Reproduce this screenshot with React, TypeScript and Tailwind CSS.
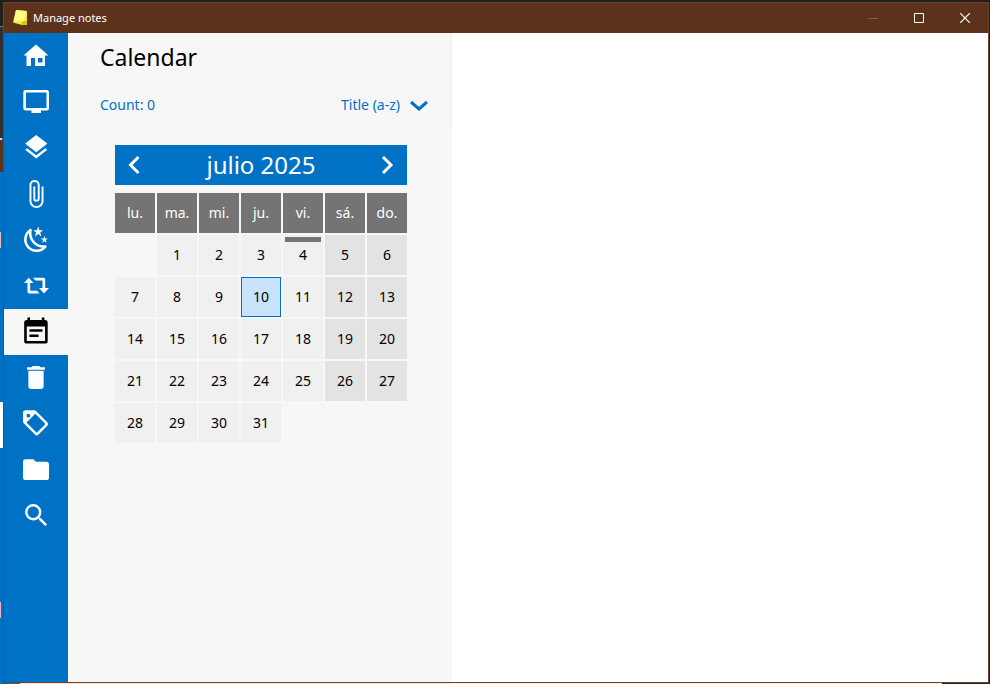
import React from "react";

type NavItem = { label: string; viewBox: string; drawing: React.ReactNode };

const navItems: NavItem[] = [
  {
    label: "Overview",
    viewBox: "0 0 32 32",
    drawing: (
      <path fillRule="evenodd" d="M16 4.5 28.5 15.5H25V26H15V18H11V26H6.5V15.5H3.5ZM18 18V22.5H22.5V18Z" />
    ),
  },
  {
    label: "Open notes",
    viewBox: "0 0 32 32",
    drawing: (
      <path
        fillRule="evenodd"
        d="M5.5 4H27A2.2 2.2 0 0 1 29 6.200V22.500A2.200 2.200 0 0 1 27 24.500H21V27H11.500V24.500H5.500A2.200 2.200 0 0 1 3.300 22.500V6.200A2.200 2.200 0 0 1 5.500 4ZM6 6.500V22H26.500V6.500Z"
      />
    ),
  },
  {
    label: "Stacks",
    viewBox: "-1.2 -0.4 26 26",
    drawing: (
      <path d="M11.990 18.540l-7.370-5.730L3 14.070l9 7 9-7-1.630-1.270-7.380 5.740zM12 16l7.360-5.730L21 9l-9-7-9 7 1.630 1.270L12 16z" />
    ),
  },
  {
    label: "Attachments",
    viewBox: "-0.5 -0.6 25.2 25.2",
    drawing: (
      <path d="M16.500 6v11.500c0 2.210-1.790 4-4 4s-4-1.790-4-4V5a2.500 2.500 0 0 1 5 0v10.500c0 .55-.45 1-1 1s-1-.45-1-1V6H10v9.500a2.500 2.500 0 0 0 5 0V5c0-2.210-1.790-4-4-4S7 2.790 7 5v12.500c0 3.040 2.460 5.500 5.500 5.500s5.500-2.460 5.500-5.500V6h-1.500z" />
    ),
  },
  {
    label: "Sleeping notes",
    viewBox: "0 0 32 32",
    drawing: (
      <>
        <path
          fill="none"
          stroke="currentColor"
          strokeWidth="2.5"
          strokeLinejoin="round"
          d="M10.500 6A11.300 11.300 0 1 0 25.500 22.500C16.500 23.500 8.500 16 10.500 6Z"
        />
        <path d="M18.200 2.500l1.300 3.700 3.700 0-3 2.400 1.200 3.800-3.200-2.300-3.200 2.300 1.200-3.800-3-2.400 3.700 0z" />
        <path d="M24.400 12l.9 2.400 2.600 0-2.100 1.700.8 2.600-2.200-1.500-2.200 1.500.8-2.600-2.100-1.700 2.600 0z" />
      </>
    ),
  },
  {
    label: "Recurrence",
    viewBox: "0 0 32 32",
    drawing: (
      <>
        <path d="M8.700 7.800 13.500 13H10.200V20.800H17L19.500 23.500H9.200A1.700 1.700 0 0 1 7.500 21.800V13H4Z" />
        <path d="M24 23.500 19 18H22.500V10.500H15.500L13 7.800H23.500A1.700 1.700 0 0 1 25.200 9.500V18H29Z" />
      </>
    ),
  },
  {
    label: "Calendar",
    viewBox: "-0.2 -0.1 24.5 24.5",
    drawing: (
      <path
        fillRule="evenodd"
        d="M19 3h-.500V1h-2v2H7.500V1h-2v2H5a2 2 0 0 0-2 2v14a2 2 0 0 0 2 2h14a2 2 0 0 0 2-2V5a2 2 0 0 0-2-2zm0 16H5V8h14v11zM7 10h10v2H7zM7 14h7v2H7z"
      />
    ),
  },
  {
    label: "Trash",
    viewBox: "-0.6 -0.2 25.2 25.2",
    drawing: <path d="M6 19c0 1.100.9 2 2 2h8c1.100 0 2-.9 2-2V6.700H6zM19 4h-3.500l-1-1h-5l-1 1H5v2h14z" />,
  },
  {
    label: "Tags",
    viewBox: "-0.4 0.2 25.6 25.6",
    drawing: (
      <path
        fillRule="evenodd"
        d="M21.410 11.580l-9-9A2 2 0 0 0 11 2H4a2 2 0 0 0-2 2v7a2 2 0 0 0 .59 1.420l9 9a2 2 0 0 0 2.820 0l7-7a2 2 0 0 0 0-2.840zM13 20l-8.200-8.200L11.800 4.800 20 13zM6.300 4.800a1.500 1.500 0 1 1 0 3 1.500 1.500 0 0 1 0-3z"
      />
    ),
  },
  {
    label: "Notebooks",
    viewBox: "-0.3 0 24.6 24.6",
    drawing: <path d="M10 4H4a2 2 0 0 0-2 2v12a2 2 0 0 0 2 2h16a2 2 0 0 0 2-2V8a2 2 0 0 0-2-2h-8z" />,
  },
  {
    label: "Search",
    viewBox: "-1 -0.2 25.4 25.4",
    drawing: (
      <path d="M15.500 14h-.79l-.28-.27A6.471 6.471 0 0 0 16 9.500 6.500 6.500 0 1 0 9.500 16c1.610 0 3.090-.59 4.230-1.570l.27.28v.79l5 4.990L20.490 19zm-6 0C7.010 14 5 11.990 5 9.500S7.010 5 9.500 5 14 7.010 14 9.500 11.990 14 9.500 14z" />
    ),
  },
];

const weekdays = ["lu.", "ma.", "mi.", "ju.", "vi.", "sá.", "do."];
const weeks = [0, 1, 2, 3, 4].map((week) =>
  weekdays.map((_, column) => {
    const day = week * 7 + column;
    return day >= 1 && day <= 31 ? day : null;
  }),
);
const selectedDay = 10;
const today = 4;

function TitleBar() {
  return (
    <header className="flex h-[30px] shrink-0 items-center bg-[#5c331a] text-white">
      <svg className="ml-2 size-4" viewBox="0 0 16 16" aria-hidden="true">
        <path fill="#f4ec3c" d="M4 0 15 1 15 15 10 15 1 12.500Z" />
        <path fill="#fffb86" d="M4 0 14 1 12 11 2 11Z" />
        <path fill="#d6c714" d="M9 15 11 11 15 11V15Z" />
      </svg>
      <h1 className="ml-[5px] flex-1 text-[11px]">Manage notes</h1>
      <button type="button" aria-label="Minimize" className="flex h-full w-[46px] items-center justify-center text-[#805f48]">
        <svg className="size-[10px]" viewBox="0 0 10 10" stroke="currentColor"><path d="M0 5.500H10" /></svg>
      </button>
      <button type="button" aria-label="Maximize" className="flex h-full w-[46px] items-center justify-center">
        <svg className="size-[10px]" viewBox="0 0 10 10" fill="none" stroke="currentColor"><path d="M.5.500H9.500V9.500H.5Z" /></svg>
      </button>
      <button type="button" aria-label="Close" className="flex h-full w-[46px] items-center justify-center">
        <svg className="size-[10px]" viewBox="0 0 10 10" stroke="currentColor" strokeWidth="1.2"><path d="M0 0 10 10M10 0 0 10" /></svg>
      </button>
    </header>
  );
}

function Sidebar() {
  return (
    <nav className="flex w-16 shrink-0 flex-col bg-[#0072c6]">
      {navItems.map((item) => {
        const active = item.label === "Calendar";
        return (
          <button
            key={item.label}
            type="button"
            aria-label={item.label}
            aria-current={active ? "page" : undefined}
            className={`flex h-[46px] items-center justify-center ${active ? "bg-[#f7f7f7] text-black" : "text-white"}`}
          >
            <svg className="size-8" viewBox={item.viewBox} fill="currentColor">{item.drawing}</svg>
          </button>
        );
      })}
    </nav>
  );
}

function Chevron({ d }: { d: string }) {
  return (
    <svg className="size-5" viewBox="0 0 20 20" fill="none" stroke="currentColor" strokeWidth="3">
      <path d={d} />
    </svg>
  );
}

function dayStyle(day: number, column: number) {
  if (day === selectedDay) return "border border-[#0072c6] bg-[#c9e3fc]";
  return column > 4 ? "bg-[#e3e3e3]" : "bg-[#f0f0f0]";
}

function MonthCalendar() {
  return (
    <section className="mx-auto w-[292px]">
      <div className="flex h-10 items-center justify-between bg-[#0072c6] px-[10px] text-white">
        <button type="button" aria-label="Previous month"><Chevron d="M13.500 2 5.500 10 13.500 18" /></button>
        <h3 className="text-2xl">julio 2025</h3>
        <button type="button" aria-label="Next month"><Chevron d="M6 2 14 10 6 18" /></button>
      </div>
      <table className="-mx-[2px] mt-[6px] w-[296px] table-fixed border-separate border-spacing-[2px] text-center text-sm">
        <thead>
          <tr>
            {weekdays.map((name) => (
              <th key={name} scope="col" className="h-10 bg-[#747474] p-0 font-normal text-white">{name}</th>
            ))}
          </tr>
        </thead>
        <tbody>
          {weeks.map((week, row) => (
            <tr key={row}>
              {week.map((day, column) => (
                <td key={column} className="h-10 p-0">
                  {day && (
                    <button type="button" className={`relative block h-10 w-full ${dayStyle(day, column)}`}>
                      {day === today && <span className="absolute inset-x-[2px] top-[2px] h-[5px] bg-[#747474]" />}
                      {day}
                    </button>
                  )}
                </td>
              ))}
            </tr>
          ))}
        </tbody>
      </table>
    </section>
  );
}

function DesktopEdge() {
  return (
    <div className="flex w-[3px] shrink-0 flex-col bg-[#0072c6]" aria-hidden="true">
      <div className="h-[26px] bg-[#202020]" />
      <div className="h-px bg-[#777777]" />
      <div className="h-[111px] bg-[#303030]" />
      <div className="h-[2px] w-[2px] bg-[#d8d8d8]" />
      <div className="h-[32px] bg-[#5c331a]" />
      <div className="mt-[60px] h-4 w-px bg-[#e6b8c6]" />
      <div className="mt-[154px] h-[46px] bg-white" />
      <div className="mt-[154px] h-4 w-px bg-[#e6b8c6]" />
    </div>
  );
}

export default function App() {
  return (
    <div className="flex h-screen flex-col bg-[#202020] font-['Noto_Sans','Open_Sans',sans-serif]">
      <div className="flex min-h-0 flex-1">
        <DesktopEdge />
        <div className="mt-[2px] mr-px flex min-w-0 flex-1 flex-col border border-[#6b4128]">
          <TitleBar />
          <div className="flex min-h-0 flex-1 bg-white">
            <Sidebar />
            <main className="w-96 shrink-0 bg-[#f7f7f7]">
              <div className="flex h-24 flex-col border-r border-[#eeeeee] pr-[22px] pl-8">
                <h2 className="pt-2 text-[23px] leading-8">Calendar</h2>
                <div className="mt-[22px] flex items-center justify-between text-sm text-[#0072c6]">
                  <p>Count: 0</p>
                  <button type="button" className="flex items-center gap-[9px]">
                    Title (a-z)
                    <Chevron d="M2 7 10 14 18 7" />
                  </button>
                </div>
              </div>
              <div className="pt-4 pl-[2px]"><MonthCalendar /></div>
            </main>
          </div>
        </div>
      </div>
      <div className="flex h-px shrink-0" aria-hidden="true">
        <div className="w-5 bg-[#0072c6]" />
        <div className="flex-1 bg-[#fbe5d8]" />
        <div className="w-12 bg-[#202020]" />
      </div>
    </div>
  );
}
